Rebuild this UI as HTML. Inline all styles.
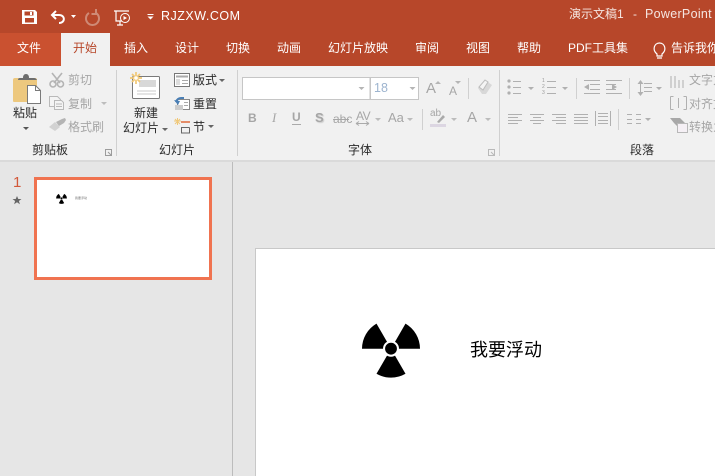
<!DOCTYPE html>
<html lang="zh"><head><meta charset="utf-8"><title>PowerPoint</title>
<style>
html,body{margin:0;padding:0}
body{width:715px;height:476px;overflow:hidden;position:relative;background:#e6e6e6;font-family:"Liberation Sans","Noto Sans CJK SC",sans-serif;font-size:12px;color:#333}
.b{position:absolute}
.t{position:absolute;white-space:nowrap;line-height:16px;height:16px}
.w{color:#fff}.g{color:#a6a6a6}.k{color:#2b2b2b}
svg{position:absolute;left:0;top:0}
</style></head><body>
<div class="b" style="left:0;top:0;width:715px;height:66px;background:#b7472a"></div>
<div class="b" style="left:0;top:33px;width:61px;height:33px;background:#ca5130"></div>
<div class="b" style="left:61px;top:33px;width:49px;height:34px;background:#f1f1f1"></div>
<div class="b" style="left:0;top:66px;width:715px;height:94px;background:#f1f1f1"></div>
<div class="b" style="left:0;top:160px;width:715px;height:2px;background:#dadada"></div>
<div class="b" style="left:232px;top:162px;width:1px;height:314px;background:#bcbcbc"></div>
<div class="b" style="left:255px;top:248px;width:460px;height:228px;background:#fff;border-left:1px solid #c8c8c8;border-top:1px solid #c8c8c8;box-sizing:border-box"></div>
<div class="b" style="left:34px;top:177px;width:178px;height:103px;background:#fff;border:3px solid #f07350;box-sizing:border-box"></div>

<svg width="715" height="476" viewBox="0 0 715 476">
<defs>
<g id="rad"><path d="M-29 0A29 29 0 0 1-14.5-25.1L0 0ZM14.5-25.1A29 29 0 0 1 29 0L0 0ZM14.500 25.100A29 29 0 0 1-14.500 25.100L0 0Z" fill="#000"/><circle r="8" fill="#fff"/><circle r="5.900" fill="#000"/></g>
</defs>
<!-- QAT -->
<path d="M22 10h13l2 2v12h-15z" fill="#fff"/><rect x="24.500" y="11.500" width="9" height="4" fill="#b7472a"/><rect x="30" y="12" width="2" height="3" fill="#fff"/><rect x="25" y="18" width="9" height="4.500" fill="#b7472a"/>
<path d="M56 11l-4 4 4 4M52 15h7c6.500 0 6.500 8 0 8" fill="none" stroke="#fff" stroke-width="2"/>
<path d="M71 15h5l-2.500 3z" fill="#fff"/>
<path d="M89 13a6.500 6.500 0 1 0 7 0M96 9v5h-4.500" fill="none" stroke="#cf8a76" stroke-width="2"/>
<path d="M114 11h15M116 11v10h8M120 21v4M117 25h6" fill="none" stroke="#fff" stroke-width="1.200"/><circle cx="125" cy="18" r="4.500" fill="#b7472a" stroke="#fff"/><path d="M123.500 16l3.500 2-3.500 2z" fill="#fff"/>
<path d="M147.500 14h6v1h-6zM147.500 16.500h6l-3 3z" fill="#fff"/>
<!-- bulb -->
<path d="M657 54c-5-4-3-11 2.500-11s7.500 7 2.500 11v2h-5zM657 58h5" fill="none" stroke="#fff" stroke-width="1.200"/>
<!-- paste -->
<path d="M13 80q0-2 2-2h20q2 0 2 2v21q0 1-1 1H14q-1 0-1-1z" fill="#edc87e"/>
<path d="M18 80q0-2 2-2h3q0-4 3-4t3 4h5q2 0 3 2z" fill="#6e6e6e"/>
<path d="M27.500 85.500h8l5 5v13h-13z" fill="#fff" stroke="#7a7a7a"/><path d="M35.500 85.500v5h5" fill="none" stroke="#7a7a7a"/>
<path d="M23 127h6l-3 3z" fill="#555"/>
<!-- cut -->
<g fill="none" stroke="#b4b4b4" stroke-width="1.600"><path d="M52 73l8 10M62 73l-8 10"/><circle cx="53" cy="84" r="3"/><circle cx="60.500" cy="84" r="3"/></g>
<!-- copy -->
<g fill="#f4f4f4" stroke="#b9b9b9"><path d="M49.500 96.500h8l3 3v7h-11z"/><path d="M54.500 100.500h7l2 2v7h-9z"/></g>
<path d="M56 104h6M56 106.500h6" stroke="#b9b9b9"/>
<path d="M101 102h6l-3 3z" fill="#bdbdbd"/>
<!-- painter -->
<path d="M49 127l6-5 5 5-5 4z" fill="#d2d2d2"/><path d="M56 122l6-3 3-1 1 2-2 3-5 3z" fill="#b4b4b4"/>
<!-- launchers -->
<path d="M105.500 149.500h6v6h-6zM108 152l3 3" fill="none" stroke="#9c9c9c"/>
<path d="M488.500 149.500h6v6h-6zM491 152l3 3" fill="none" stroke="#b9b9b9"/>
<!-- seps -->
<g fill="#d0d0d0"><rect x="116" y="70" width="1" height="86"/><rect x="237" y="70" width="1" height="86"/><rect x="499" y="70" width="1" height="86"/><rect x="468" y="78" width="1" height="21"/><rect x="422" y="109" width="1" height="21"/><rect x="576" y="78" width="1" height="21"/><rect x="629" y="78" width="1" height="21"/><rect x="618" y="109" width="1" height="21"/></g>
<!-- new slide -->
<rect x="132.500" y="76.500" width="27" height="22" rx="1" fill="#fff" stroke="#7a7a7a"/><rect x="139" y="80" width="17" height="7" fill="#d8d8d8"/><path d="M137 91h19M137 94h19" stroke="#c8c8c8"/>
<g stroke="#f1c876" stroke-width="1.700"><path d="M130 78h12M136 72v12M132 74l8 8M140 74l-8 8"/></g><circle cx="136" cy="78" r="1.800" fill="#fff"/>
<path d="M162 128h6l-3 3zM219 79h6l-3 3zM208 125h6l-3 3z" fill="#666"/>
<!-- layout -->
<rect x="174.500" y="73.500" width="15" height="13" fill="#fff" stroke="#777"/><path d="M176 76.500h12" stroke="#aaa" stroke-width="2"/><path d="M176 79h4v6h-4z" fill="#ddd"/><path d="M182 80.500h6M182 83.500h6" stroke="#aaa"/>
<!-- reset -->
<rect x="177.500" y="99.500" width="12" height="10" fill="#fff" stroke="#888"/><rect x="175" y="105" width="8" height="5" fill="#ccc"/><path d="M184 102.500h4M184 105.500h4" stroke="#aaa"/>
<path d="M176 102a5 5 0 0 1 5-4h3" fill="none" stroke="#4a7fb5" stroke-width="2"/><path d="M174 100l4 5 2-4z" fill="#4a7fb5"/>
<!-- section -->
<g stroke="#f0c878"><path d="M174 121h7M177.500 118v7M175 119l5 5M180 119l-5 5"/></g>
<path d="M181 122h9" stroke="#e06a3a" stroke-width="1.500"/><path d="M181 127.500h8.500M181.500 127.500v5.500h8v-5.500" fill="none" stroke="#666"/>
<!-- font boxes -->
<rect x="242.500" y="77.500" width="176" height="22" fill="#fff" stroke="#c6c6c6"/><rect x="369.500" y="77" width="1.500" height="23" fill="#c6c6c6"/>
<path d="M358.500 87h6l-3 3zM409.500 87h6l-3 3z" fill="#b5b5b5"/>
<!-- grow/shrink carets -->
<path d="M435 84h6l-3-3zM455 81h6l-3 3z" fill="#b5b5b5"/>
<!-- eraser -->
<path d="M478 88l7-8 7 5-6 9h-4z" fill="#d8d8d8"/><path d="M479 87l6-7 3 2-5 8z" fill="#f4f4f4" stroke="#bdbdbd"/>
<!-- font row arrows -->
<path d="M375 118h6l-3 3zM407 118h6l-3 3zM451 118h6l-3 3zM485 118h6l-3 3z" fill="#bcbcbc"/>
<path d="M292 124.500h9" stroke="#aaa"/>
<path d="M356 123.500h13M356 123.500l3-2M356 123.500l3 2M369 123.500l-3-2M369 123.500l-3 2" stroke="#aaa" fill="none"/>
<path d="M333 119.500h16" stroke="#aaa"/>
<rect x="430" y="124" width="16" height="3" fill="#dcd6e2"/><path d="M437 122l6-7 2 2-6 6z" fill="#aaa"/>
<!-- para icons -->
<g stroke="#b0b0b0" fill="none">
<path d="M513 81.500h8M513 87.500h8M513 93.500h8M547 81.500h9M547 87.500h9M547 93.500h9"/>
<path d="M584 80.500h16M590 84.500h10M590 89.500h10M584 93.500h16M606 80.500h16M606 84.500h10M606 89.500h10M606 93.500h16"/>
<path d="M644 83.500h8M644 87.500h8M644 91.500h8"/>
<path d="M508 114.500h14M508 117.500h10M508 120.500h14M508 123.500h10M530 114.500h14M533 117.500h8M530 120.500h14M533 123.500h8M552 114.500h14M556 117.500h10M552 120.500h14M556 123.500h10M574 114.500h14M574 117.500h14M574 120.500h14M574 123.500h14"/>
<path d="M595.500 111v15M610.500 111v15M598 113.500h10M598 116.500h10M598 120.500h10M598 123.500h10"/>
<path d="M627 114.500h5M627 119.500h5M627 123.500h5M636 114.500h5M636 119.500h5M636 123.500h5"/>
<path d="M640.500 82v12"/>
<path d="M671 76v12M675 76v12M683 80v8M679 80v8"/>
<path d="M670.500 96.500h3M683.500 96.500h3M670.500 96.500v13M686.500 96.500v13M670.500 109.500h3M683.500 109.500h3M678.500 98v10"/>
</g>
<g fill="#b0b0b0"><circle cx="509" cy="81" r="1.600"/><circle cx="509" cy="87" r="1.600"/><circle cx="509" cy="93" r="1.600"/>
<path d="M528 87h6l-3 3zM562 87h6l-3 3zM656 87h6l-3 3zM645 118h6l-3 3z"/>
<path d="M584 87l5-3v6zM612 84l5 3-5 3z"/>
<path d="M640.500 80l-3 4h6zM640.500 96l-3-4h6z"/>
<path d="M670 118h10l6 6h-6l-1 4-5-5z" fill="#a8a8a8"/></g>
<path d="M677.500 123.500h10v9h-10z" fill="#f5f0f5" stroke="#b8b8b8"/>
<!-- slides -->
<use href="#rad" transform="translate(391 348.700)"/>
<use href="#rad" transform="translate(61.500 198.500) scale(.185)"/>
<path d="M17 196l1.300 3h3.200l-2.600 2 1 3.200-2.900-1.900-2.900 1.900 1-3.200-2.600-2h3.200z" fill="#666"/>
</svg>

<!-- title bar -->
<div class="t w" style="left:161px;top:8px;font-size:12.500px;letter-spacing:.5px">RJZXW.COM</div>
<div class="t w" style="left:569px;top:6px;font-size:12px;color:#f5e6e1">演示文稿1</div>
<div class="t w" style="left:633px;top:6px;font-size:12px;color:#f5e6e1">-</div>
<div class="t w" style="left:645px;top:6px;font-size:12.500px;color:#f5e6e1;letter-spacing:.3px">PowerPoint</div>
<!-- tabs -->
<div class="t w" style="left:17px;top:40px">文件</div>
<div class="t" style="left:73px;top:40px;color:#b7472a">开始</div>
<div class="t w" style="left:124px;top:40px">插入</div>
<div class="t w" style="left:175px;top:40px">设计</div>
<div class="t w" style="left:226px;top:40px">切换</div>
<div class="t w" style="left:277px;top:40px">动画</div>
<div class="t w" style="left:328px;top:40px">幻灯片放映</div>
<div class="t w" style="left:415px;top:40px">审阅</div>
<div class="t w" style="left:466px;top:40px">视图</div>
<div class="t w" style="left:517px;top:40px">帮助</div>
<div class="t w" style="left:568px;top:40px">PDF工具集</div>
<div class="t w" style="left:671px;top:40px">告诉我你</div>
<!-- clipboard group -->
<div class="t k" style="left:13px;top:105px">粘贴</div>
<div class="t g" style="left:68px;top:72px">剪切</div>
<div class="t g" style="left:68px;top:96px">复制</div>
<div class="t g" style="left:68px;top:119px">格式刷</div>
<div class="t k" style="left:32px;top:142px">剪贴板</div>
<!-- slide group -->
<div class="t k" style="left:134px;top:105px">新建</div>
<div class="t k" style="left:123px;top:120px">幻灯片</div>
<div class="t k" style="left:193px;top:72px">版式</div>
<div class="t k" style="left:193px;top:96px">重置</div>
<div class="t k" style="left:193px;top:119px">节</div>
<div class="t k" style="left:159px;top:142px">幻灯片</div>
<!-- font group -->
<div class="t" style="left:374px;top:80px;color:#9db4cf;font-size:12.500px">18</div>
<div class="t g" style="left:426px;top:81px;font-size:15px">A</div>
<div class="t g" style="left:449px;top:83px;font-size:12px">A</div>
<div class="t g" style="left:248px;top:110px;font-weight:bold">B</div>
<div class="t g" style="left:272px;top:110px;font-style:italic;font-family:'Liberation Serif',serif;font-size:13px">I</div>
<div class="t g" style="left:292px;top:109px;font-weight:bold">U</div>
<div class="t g" style="left:315px;top:110px;font-weight:bold;font-size:13px;text-shadow:1px 1px 1px #ccc">S</div>
<div class="t g" style="left:333px;top:111px">abc</div>
<div class="t g" style="left:356px;top:108px;letter-spacing:-.5px">AV</div>
<div class="t g" style="left:388px;top:110px;font-size:13px">Aa</div>
<div class="t g" style="left:430px;top:106px;font-size:10px">ab</div>
<div class="t g" style="left:467px;top:110px;font-size:15px">A</div>
<div class="t k" style="left:348px;top:142px">字体</div>
<!-- paragraph group -->
<div class="t" style="left:542px;top:78px;font-size:5px;line-height:6px;height:18px;color:#999">1<br>2<br>3</div>
<div class="t g" style="left:689px;top:72px">文字方</div>
<div class="t g" style="left:689px;top:96px">对齐文</div>
<div class="t g" style="left:689px;top:119px">转换为</div>
<div class="t k" style="left:630px;top:142px">段落</div>
<!-- panel -->
<div class="t" style="left:13px;top:175px;font-size:15px;color:#d2593a">1</div>
<div class="t" style="left:75px;top:190px;font-size:3px;color:#777">我要浮动</div>
<div class="t" style="left:470px;top:340px;font-size:18px;line-height:20px;height:20px;color:#000">我要浮动</div>
</body></html>
